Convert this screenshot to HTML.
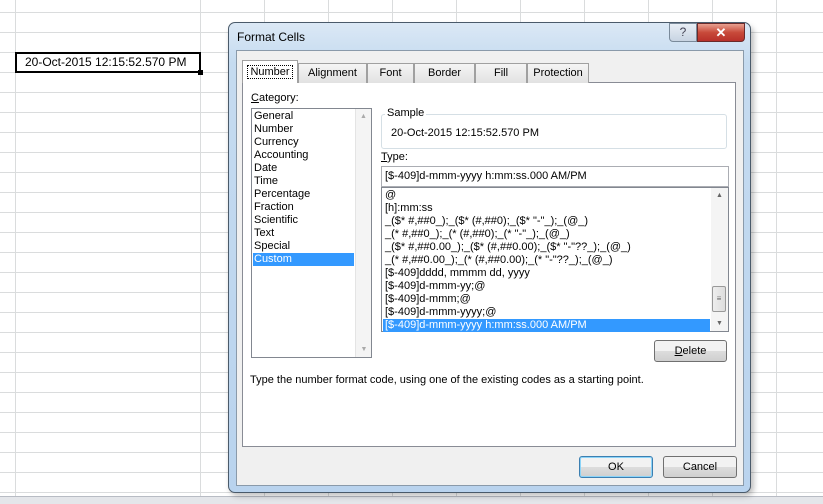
<!DOCTYPE html>
<html><head><style>
*{margin:0;padding:0;box-sizing:border-box}
body{width:823px;height:504px;overflow:hidden;background:#fff;font-family:"Liberation Sans",sans-serif;font-size:11px;color:#000;position:relative}
.a{position:absolute}
.hl{position:absolute;left:0;width:823px;height:1px;background:#dadcdd}
.vl{position:absolute;top:0;height:504px;width:1px;background:#dadcdd}
.tab{position:absolute;top:63px;height:20px;border:1px solid #a0a0a0;border-bottom:none;background:linear-gradient(#f5f5f5,#e2e2e2);text-align:center;line-height:18px;font-size:11px}
.btn{position:absolute;border:1px solid #707070;border-radius:3px;background:linear-gradient(#f2f2f2 50%,#dddddd 50%,#cfcfcf);text-align:center;font-size:11px}
.li{height:13px;line-height:13px;white-space:nowrap}
</style></head><body>
<div class="hl" style="top:12px"></div><div class="hl" style="top:32px"></div><div class="hl" style="top:52px"></div><div class="hl" style="top:72px"></div><div class="hl" style="top:92px"></div><div class="hl" style="top:112px"></div><div class="hl" style="top:132px"></div><div class="hl" style="top:152px"></div><div class="hl" style="top:172px"></div><div class="hl" style="top:192px"></div><div class="hl" style="top:212px"></div><div class="hl" style="top:232px"></div><div class="hl" style="top:252px"></div><div class="hl" style="top:272px"></div><div class="hl" style="top:292px"></div><div class="hl" style="top:312px"></div><div class="hl" style="top:332px"></div><div class="hl" style="top:352px"></div><div class="hl" style="top:372px"></div><div class="hl" style="top:392px"></div><div class="hl" style="top:412px"></div><div class="hl" style="top:432px"></div><div class="hl" style="top:452px"></div><div class="hl" style="top:472px"></div><div class="hl" style="top:492px"></div>
<div class="vl" style="left:15px"></div><div class="vl" style="left:200px"></div><div class="vl" style="left:264px"></div><div class="vl" style="left:328px"></div><div class="vl" style="left:392px"></div><div class="vl" style="left:456px"></div><div class="vl" style="left:520px"></div><div class="vl" style="left:584px"></div><div class="vl" style="left:648px"></div><div class="vl" style="left:712px"></div><div class="vl" style="left:776px"></div>
<div class="a" style="left:15px;top:52px;width:186px;height:21px;border:2px solid #000;font-size:12px;line-height:17px;padding-left:8px;background:#fff;white-space:nowrap;overflow:visible">20-Oct-2015 12:15:52.570 PM</div>
<div class="a" style="left:198px;top:70px;width:5px;height:5px;background:#000"></div>
<div class="a" style="left:0;top:496px;width:823px;height:8px;background:#e4e6ea;border-top:1px solid #b8bcc4"></div>
<!-- dialog -->
<div class="a" style="left:230px;top:26px;width:524px;height:470px;background:rgba(0,0,0,0.25);filter:blur(3px);border-radius:8px"></div>
<div class="a" style="left:228px;top:22px;width:523px;height:471px;border:1px solid #4a5a6a;border-radius:7px;background:linear-gradient(#dbe8f5,#c5dbf0 40px,#b9d3ee)"></div>
<div class="a" style="left:237px;top:30px;font-size:12px">Format Cells</div>
<div class="a" style="left:669px;top:23px;width:28px;height:19px;border:1px solid #7a8a9a;border-radius:0 0 0 4px;background:linear-gradient(#e8eef5,#c8d4e2);text-align:center;font-size:12px;line-height:17px;color:#445">?</div>
<div class="a" style="left:697px;top:23px;width:48px;height:19px;border:1px solid #6a2a2a;border-radius:0 0 4px 0;background:linear-gradient(#e8a090,#c84a3a 50%,#b8302a);text-align:center;color:#fff;font-weight:bold;font-size:13px;line-height:17px">✕</div>
<div class="a" style="left:236px;top:50px;width:508px;height:436px;background:#f0f0f0;border:1px solid #8a9aaa"></div>
<div class="a" style="left:242px;top:82px;width:494px;height:365px;background:#fff;border:1px solid #898c95"></div>
<div class="tab" style="left:298px;width:69px">Alignment</div>
<div class="tab" style="left:367px;width:47px">Font</div>
<div class="tab" style="left:414px;width:61px">Border</div>
<div class="tab" style="left:475px;width:52px">Fill</div>
<div class="tab" style="left:527px;width:62px">Protection</div>
<div class="tab" style="left:242px;top:60px;width:56px;height:23px;background:#fff;line-height:22px"><span style="border:1px dotted #000;padding:0 2px">Number</span></div>
<div class="a" style="left:251px;top:92px"><u>C</u>ategory:</div>
<div class="a" style="left:251px;top:108px;width:121px;height:250px;border:1px solid #828790;background:#fff;padding:1px 0 0 2px">
<div class="li">General</div><div class="li">Number</div><div class="li">Currency</div><div class="li">Accounting</div><div class="li">Date</div><div class="li">Time</div><div class="li">Percentage</div><div class="li">Fraction</div><div class="li">Scientific</div><div class="li">Text</div><div class="li">Special</div><div class="li" style="background:#3399ff;color:#fff;margin-left:-1px;padding-left:1px;width:101px">Custom</div>
</div>
<div class="a" style="left:355px;top:109px;width:16px;height:248px;background:#f4f4f4;border-left:1px solid #e4e4e4;color:#aaa;font-size:7px;text-align:center"><div style="margin-top:4px">▲</div><div style="position:absolute;bottom:4px;width:16px">▼</div></div>
<div class="a" style="left:381px;top:114px;width:346px;height:35px;border:1px solid #d5dfe5;border-radius:3px"></div>
<div class="a" style="left:385px;top:107px;background:#fff;padding:0 2px">Sample</div>
<div class="a" style="left:391px;top:127px">20-Oct-2015 12:15:52.570 PM</div>
<div class="a" style="left:381px;top:151px"><u>T</u>ype:</div>
<div class="a" style="left:381px;top:166px;width:348px;height:21px;border:1px solid #abadb3;padding:3px 0 0 3px">[$-409]d-mmm-yyyy h:mm:ss.000 AM/PM</div>
<div class="a" style="left:381px;top:187px;width:348px;height:145px;border:1px solid #828790;background:#fff;padding:1px 0 0 3px">
<div class="li">@</div><div class="li">[h]:mm:ss</div><div class="li">_($* #,##0_);_($* (#,##0);_($* "-"_);_(@_)</div><div class="li">_(* #,##0_);_(* (#,##0);_(* "-"_);_(@_)</div><div class="li">_($* #,##0.00_);_($* (#,##0.00);_($* "-"??_);_(@_)</div><div class="li">_(* #,##0.00_);_(* (#,##0.00);_(* "-"??_);_(@_)</div><div class="li">[$-409]dddd, mmmm dd, yyyy</div><div class="li">[$-409]d-mmm-yy;@</div><div class="li">[$-409]d-mmm;@</div><div class="li">[$-409]d-mmm-yyyy;@</div><div class="li" style="background:#3399ff;color:#fff;margin-left:-2px;padding-left:2px;width:327px">[$-409]d-mmm-yyyy h:mm:ss.000 AM/PM</div>
</div>
<div class="a" style="left:711px;top:188px;width:17px;height:143px;background:#f4f4f4;color:#666;font-size:7px;text-align:center"><div style="margin-top:4px">▲</div><div style="position:absolute;left:1px;top:98px;width:14px;height:26px;border:1px solid #999;border-radius:2px;background:linear-gradient(90deg,#eee,#ddd);line-height:24px;font-size:8px">≡</div><div style="position:absolute;bottom:4px;width:17px">▼</div></div>
<div class="btn" style="left:654px;top:340px;width:73px;height:22px;line-height:20px"><u>D</u>elete</div>
<div class="a" style="left:250px;top:374px">Type the number format code, using one of the existing codes as a starting point.</div>
<div class="btn" style="left:579px;top:456px;width:74px;height:22px;line-height:20px;border-color:#3c7fb1;box-shadow:inset 0 0 0 1px #8cd4f8">OK</div>
<div class="btn" style="left:663px;top:456px;width:74px;height:22px;line-height:20px">Cancel</div>
</body></html>
